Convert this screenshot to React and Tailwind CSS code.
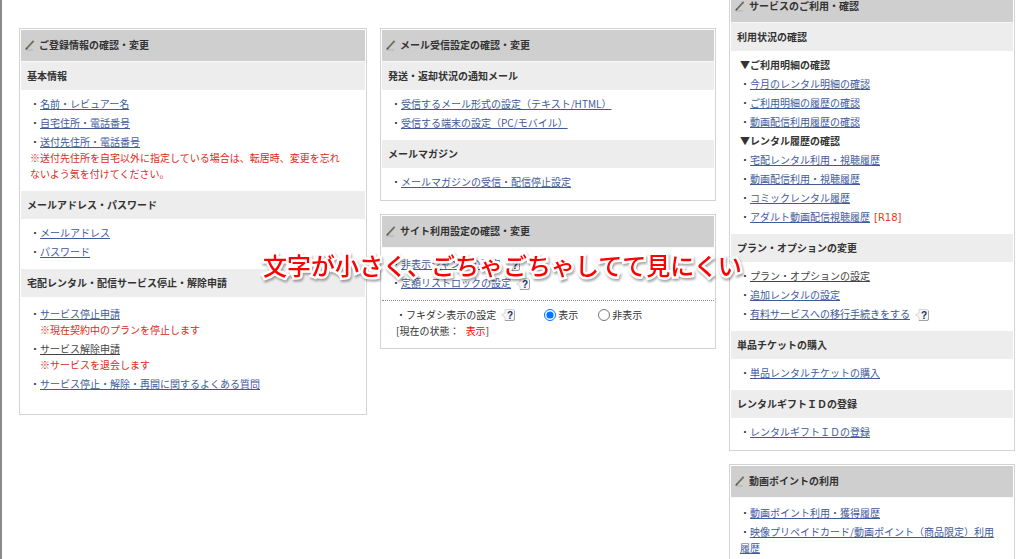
import React, { useState } from "react";

const PencilIcon = () => (
  <svg width="10" height="12" viewBox="0 0 10 12" className="shrink-0" aria-hidden="true">
    <path d="M1 11 H8" stroke="#b0b0b0" strokeWidth="1" />
    <path d="M1.6 9.6 L8.6 1.8" stroke="#6a6a62" strokeWidth="1.8" />
    <path d="M2.8 9.4 L8.8 2.8" stroke="#a5a37c" strokeWidth="0.7" />
    <path d="M0.4 10.8 L1 8.6 L2.4 9.9 Z" fill="#333" />
  </svg>
);

const HelpButton = () => (
  <button type="button" aria-label="ヘルプ" className="-my-1 ml-1 inline-block align-middle">
    <svg width="16" height="14" viewBox="0 0 16 14">
      <path d="M5 1.5 H13 Q14.5 1.5 14.5 3 V11 Q14.5 12.5 13 12.5 H5 V9 L1.5 7 L5 5 Z" fill="#f6f6f6" stroke="#d6d6d6" />
      <path d="M5 12.5 H13 Q14.5 12.5 14.5 11 V3" fill="none" stroke="#a0a0a0" />
      <text x="10" y="11" textAnchor="middle" fontSize="10" fontWeight="700" fontFamily="Liberation Sans, sans-serif" fill="#26315c">
        ?
      </text>
    </svg>
  </button>
);

const Panel = ({ title, children }) => (
  <section className="border border-[#d3d3d3] bg-white p-px">
    <h2 className="flex h-8 items-center gap-1 border-b border-[#f7f7f7] bg-[#cfcfcf] pb-px pl-1 font-bold">
      <PencilIcon />
      {title}
    </h2>
    {children}
  </section>
);

const SubTitle = ({ children }) => (
  <h3 className="flex h-7 items-center bg-[#ededed] pl-[6px] font-bold">{children}</h3>
);

const List = ({ children }) => <ul className="pt-[3px] pb-[9px] pl-[9px]">{children}</ul>;

const Item = ({ label, visited, help, children }) => (
  <li className="pt-[3px]">
    ・
    <a
      href="#"
      className={visited ? "text-[#444] underline" : "text-[#3f5b9b] underline"}
    >
      {label}
    </a>
    {help && <HelpButton />}
    {children}
  </li>
);

const Note = ({ children }) => <p className="pl-[10px] text-[#dd2a1b]">{children}</p>;

export default function App() {
  const [balloon, setBalloon] = useState("on");

  return (
    <div className="relative h-screen overflow-hidden border-l-2 border-[#8a8a8a] bg-white font-['Noto_Sans_CJK_JP',sans-serif] text-[10px] leading-4 text-[#333]">
      <main className="grid grid-cols-[348fr_336fr_286fr] items-start gap-[13px] pr-[9px] pl-[17px]">
        <div className="pt-7">
          <Panel title="ご登録情報の確認・変更">
            <SubTitle>基本情報</SubTitle>
            <List>
              <Item label="名前・レビュアー名" />
              <Item label="自宅住所・電話番号" />
              <Item label="送付先住所・電話番号" />
              <li className="text-[#dd2a1b]">
                ※送付先住所を自宅以外に指定している場合は、転居時、変更を忘れ
                <br />
                ないよう気を付けてください。
              </li>
            </List>
            <SubTitle>メールアドレス・パスワード</SubTitle>
            <List>
              <Item label="メールアドレス" />
              <Item label="パスワード" />
            </List>
            <SubTitle>宅配レンタル・配信サービス停止・解除申請</SubTitle>
            <div className="pt-[3px] pb-3">
              <List>
                <Item label="サービス停止申請">
                  <Note>※現在契約中のプランを停止します</Note>
                </Item>
                <Item label="サービス解除申請" visited>
                  <Note>※サービスを退会します</Note>
                </Item>
                <Item label="サービス停止・解除・再開に関するよくある質問" />
              </List>
            </div>
          </Panel>
        </div>

        <div className="grid gap-[13px] pt-7">
          <Panel title="メール受信設定の確認・変更">
            <SubTitle>発送・返却状況の通知メール</SubTitle>
            <List>
              <Item label="受信するメール形式の設定（テキスト/HTML）" />
              <Item label="受信する端末の設定（PC/モバイル）" />
            </List>
            <SubTitle>メールマガジン</SubTitle>
            <List>
              <Item label="メールマガジンの受信・配信停止設定" />
            </List>
          </Panel>
          <Panel title="サイト利用設定の確認・変更">
            <div className="border-b border-dotted border-[#888] pt-[2px]">
              <List>
                <Item label="非表示ジャンルの設定" help />
                <Item label="定額リストロックの設定" help />
              </List>
            </div>
            <div className="pt-[6px] pb-2 pl-[14px]">
              <div className="flex items-center">
                <span>・フキダシ表示の設定</span>
                <HelpButton />
                <label className="ml-7 flex items-center gap-[2px]">
                  <input
                    type="radio"
                    name="balloon"
                    className="size-3"
                    checked={balloon === "on"}
                    onChange={() => setBalloon("on")}
                  />
                  表示
                </label>
                <label className="ml-5 flex items-center gap-[2px]">
                  <input
                    type="radio"
                    name="balloon"
                    className="size-3"
                    checked={balloon === "off"}
                    onChange={() => setBalloon("off")}
                  />
                  非表示
                </label>
              </div>
              <p>
                [現在の状態： <span className="ml-1 text-[#f00]">表示</span>]
              </p>
            </div>
          </Panel>
        </div>

        <div className="-mt-[11px] grid gap-[13px]">
          <Panel title="サービスのご利用・確認">
            <SubTitle>利用状況の確認</SubTitle>
            <List>
              <li className="pt-[3px] font-bold">▼ご利用明細の確認</li>
              <Item label="今月のレンタル明細の確認" />
              <Item label="ご利用明細の履歴の確認" />
              <Item label="動画配信利用履歴の確認" />
              <li className="pt-[3px] font-bold">▼レンタル履歴の確認</li>
              <Item label="宅配レンタル利用・視聴履歴" />
              <Item label="動画配信利用・視聴履歴" />
              <Item label="コミックレンタル履歴" />
              <Item label="アダルト動画配信視聴履歴">
                <span className="ml-1 font-['DejaVu_Sans',sans-serif] leading-3 text-[#e8381b]">[R18]</span>
              </Item>
            </List>
            <SubTitle>プラン・オプションの変更</SubTitle>
            <List>
              <Item label="プラン・オプションの設定" visited />
              <Item label="追加レンタルの設定" />
              <Item label="有料サービスへの移行手続きをする" help />
            </List>
            <SubTitle>単品チケットの購入</SubTitle>
            <List>
              <Item label="単品レンタルチケットの購入" />
            </List>
            <SubTitle>レンタルギフトＩＤの登録</SubTitle>
            <List>
              <Item label="レンタルギフトＩＤの登録" />
            </List>
          </Panel>
          <Panel title="動画ポイントの利用">
            <div className="pt-px">
              <List>
                <Item label="動画ポイント利用・獲得履歴" />
                <Item
                  label={
                    <>
                      映像プリペイドカード/動画ポイント（商品限定）利用
                      <br />
                      履歴
                    </>
                  }
                />
              </List>
            </div>
          </Panel>
        </div>
      </main>

      {/* Red callout written over the page */}
      <p className="absolute top-[249px] left-[261px] text-2xl leading-8 font-medium whitespace-nowrap text-[#ff0000] [-webkit-text-stroke:5px_white] [paint-order:stroke_fill] [filter:drop-shadow(1px_2px_1px_rgb(0_0_0/0.35))]">
        文字が小さく、ごちゃごちゃしてて見にくい
      </p>
    </div>
  );
}
